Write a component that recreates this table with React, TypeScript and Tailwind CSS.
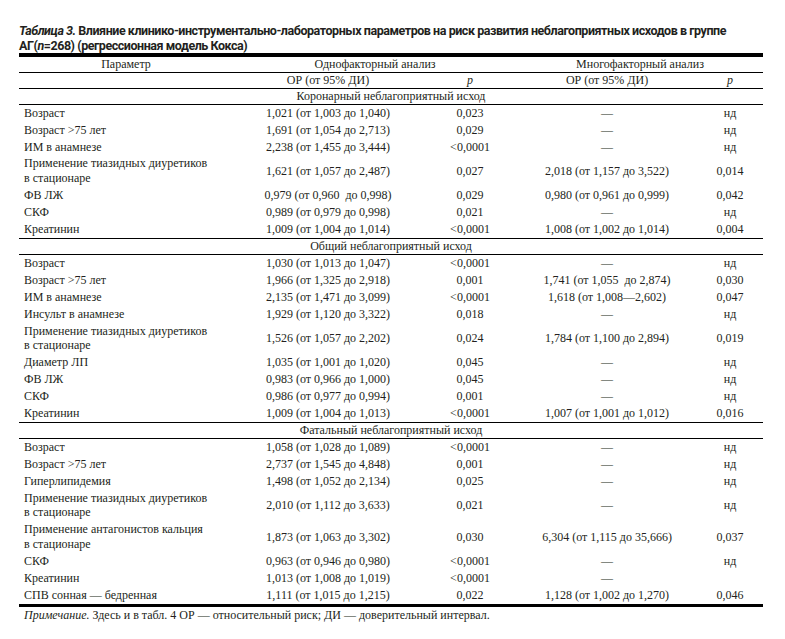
type Row = { name: string; or1: string; p1: string; or2: string; p2: string }

const sections: { title: string; rows: Row[] }[] = [
  {
    title: 'Коронарный неблагоприятный исход',
    rows: [
      { name: 'Возраст', or1: '1,021 (от 1,003 до 1,040)', p1: '0,023', or2: '—', p2: 'нд' },
      { name: 'Возраст >75 лет', or1: '1,691 (от 1,054 до 2,713)', p1: '0,029', or2: '—', p2: 'нд' },
      { name: 'ИМ в анамнезе', or1: '2,238 (от 1,455 до 3,444)', p1: '<0,0001', or2: '—', p2: 'нд' },
      { name: 'Применение тиазидных диуретиков\nв стационаре', or1: '1,621 (от 1,057 до 2,487)', p1: '0,027', or2: '2,018 (от 1,157 до 3,522)', p2: '0,014' },
      { name: 'ФВ ЛЖ', or1: '0,979 (от 0,960  до 0,998)', p1: '0,029', or2: '0,980 (от 0,961 до 0,999)', p2: '0,042' },
      { name: 'СКФ', or1: '0,989 (от 0,979 до 0,998)', p1: '0,021', or2: '—', p2: 'нд' },
      { name: 'Креатинин', or1: '1,009 (от 1,004 до 1,014)', p1: '<0,0001', or2: '1,008 (от 1,002 до 1,014)', p2: '0,004' },
    ],
  },
  {
    title: 'Общий неблагоприятный исход',
    rows: [
      { name: 'Возраст', or1: '1,030 (от 1,013 до 1,047)', p1: '<0,0001', or2: '—', p2: 'нд' },
      { name: 'Возраст >75 лет', or1: '1,966 (от 1,325 до 2,918)', p1: '0,001', or2: '1,741 (от 1,055  до 2,874)', p2: '0,030' },
      { name: 'ИМ в анамнезе', or1: '2,135 (от 1,471 до 3,099)', p1: '<0,0001', or2: '1,618 (от 1,008—2,602)', p2: '0,047' },
      { name: 'Инсульт в анамнезе', or1: '1,929 (от 1,120 до 3,322)', p1: '0,018', or2: '—', p2: 'нд' },
      { name: 'Применение тиазидных диуретиков\nв стационаре', or1: '1,526 (от 1,057 до 2,202)', p1: '0,024', or2: '1,784 (от 1,100 до 2,894)', p2: '0,019' },
      { name: 'Диаметр ЛП', or1: '1,035 (от 1,001 до 1,020)', p1: '0,045', or2: '—', p2: 'нд' },
      { name: 'ФВ ЛЖ', or1: '0,983 (от 0,966 до 1,000)', p1: '0,045', or2: '—', p2: 'нд' },
      { name: 'СКФ', or1: '0,986 (от 0,977 до 0,994)', p1: '0,001', or2: '—', p2: 'нд' },
      { name: 'Креатинин', or1: '1,009 (от 1,004 до 1,013)', p1: '<0,0001', or2: '1,007 (от 1,001 до 1,012)', p2: '0,016' },
    ],
  },
  {
    title: 'Фатальный неблагоприятный исход',
    rows: [
      { name: 'Возраст', or1: '1,058 (от 1,028 до 1,089)', p1: '<0,0001', or2: '—', p2: 'нд' },
      { name: 'Возраст >75 лет', or1: '2,737 (от 1,545 до 4,848)', p1: '0,001', or2: '—', p2: 'нд' },
      { name: 'Гиперлипидемия', or1: '1,498 (от 1,052 до 2,134)', p1: '0,025', or2: '—', p2: 'нд' },
      { name: 'Применение тиазидных диуретиков\nв стационаре', or1: '2,010 (от 1,112 до 3,633)', p1: '0,021', or2: '—', p2: 'нд' },
      { name: 'Применение антагонистов кальция\nв стационаре', or1: '1,873 (от 1,063 до 3,302)', p1: '0,030', or2: '6,304 (от 1,115 до 35,666)', p2: '0,037' },
      { name: 'СКФ', or1: '0,963 (от 0,946 до 0,980)', p1: '<0,0001', or2: '—', p2: 'нд' },
      { name: 'Креатинин', or1: '1,013 (от 1,008 до 1,019)', p1: '<0,0001', or2: '—', p2: '' },
      { name: 'СПВ сонная — бедренная', or1: '1,111 (от 1,015 до 1,215)', p1: '0,022', or2: '1,128 (от 1,002 до 1,270)', p2: '0,046' },
    ],
  },
]

const serif = "font-['Liberation_Serif','Times_New_Roman',serif]"

export default function App() {
  return (
    <div className="min-h-[639px] w-[785px] bg-white pt-[23px] text-[#231f20]">
      <div className="ml-[19px] w-[744px]">
        <p className="whitespace-nowrap font-['Roboto','Noto_Sans',sans-serif] text-[12.5px] font-bold leading-[15px] tracking-[-0.45px]">
          <i>Таблица 3.</i> Влияние клинико-инструментально-лабораторных параметров на риск развития неблагоприятных исходов в группе
          <br />
          АГ(<i>n</i>=268) (регрессионная модель Кокса)
        </p>

        <table className={`w-[744px] table-fixed border-collapse text-[12px] leading-[14.9px] ${serif}`}>
          <colgroup>
            <col className="w-[214px]" />
            <col className="w-[190px]" />
            <col className="w-[94px]" />
            <col className="w-[180px]" />
            <col className="w-[66px]" />
          </colgroup>
          <thead>
            <tr className="border-t-4 border-b border-black">
              <th className="py-0 font-normal">Параметр</th>
              <th colSpan={2} className="py-0 font-normal">Однофакторный анализ</th>
              <th colSpan={2} className="py-0 font-normal">Многофакторный анализ</th>
            </tr>
            <tr className="border-b border-black">
              <th className="py-0 font-normal" />
              <th className="py-0 font-normal">ОР (от 95% ДИ)</th>
              <th className="py-0 font-normal italic">p</th>
              <th className="py-0 font-normal">ОР (от 95% ДИ)</th>
              <th className="py-0 font-normal italic">p</th>
            </tr>
          </thead>
          {sections.map((s, si) => (
            <tbody key={s.title} className={si === sections.length - 1 ? 'border-b-[3px] border-black' : ''}>
              <tr className="border-y border-black">
                <td colSpan={5} className="py-0 text-center">{s.title}</td>
              </tr>
              {s.rows.map((r, i) => (
                <tr key={i}>
                  <td className="whitespace-pre-line py-px pl-[5px] align-middle">{r.name}</td>
                  <td className="whitespace-pre py-px text-center align-middle">{r.or1}</td>
                  <td className="py-px text-center align-middle">{r.p1}</td>
                  <td className="whitespace-pre py-px text-center align-middle">{r.or2}</td>
                  <td className="py-px text-center align-middle">{r.p2}</td>
                </tr>
              ))}
            </tbody>
          ))}
        </table>

        <p className={`mt-[1px] pl-[5px] text-[12px] leading-[15px] ${serif}`}>
          <i>Примечание.</i> Здесь и в табл. 4 ОР — относительный риск; ДИ — доверительный интервал.
        </p>
      </div>
    </div>
  )
}
